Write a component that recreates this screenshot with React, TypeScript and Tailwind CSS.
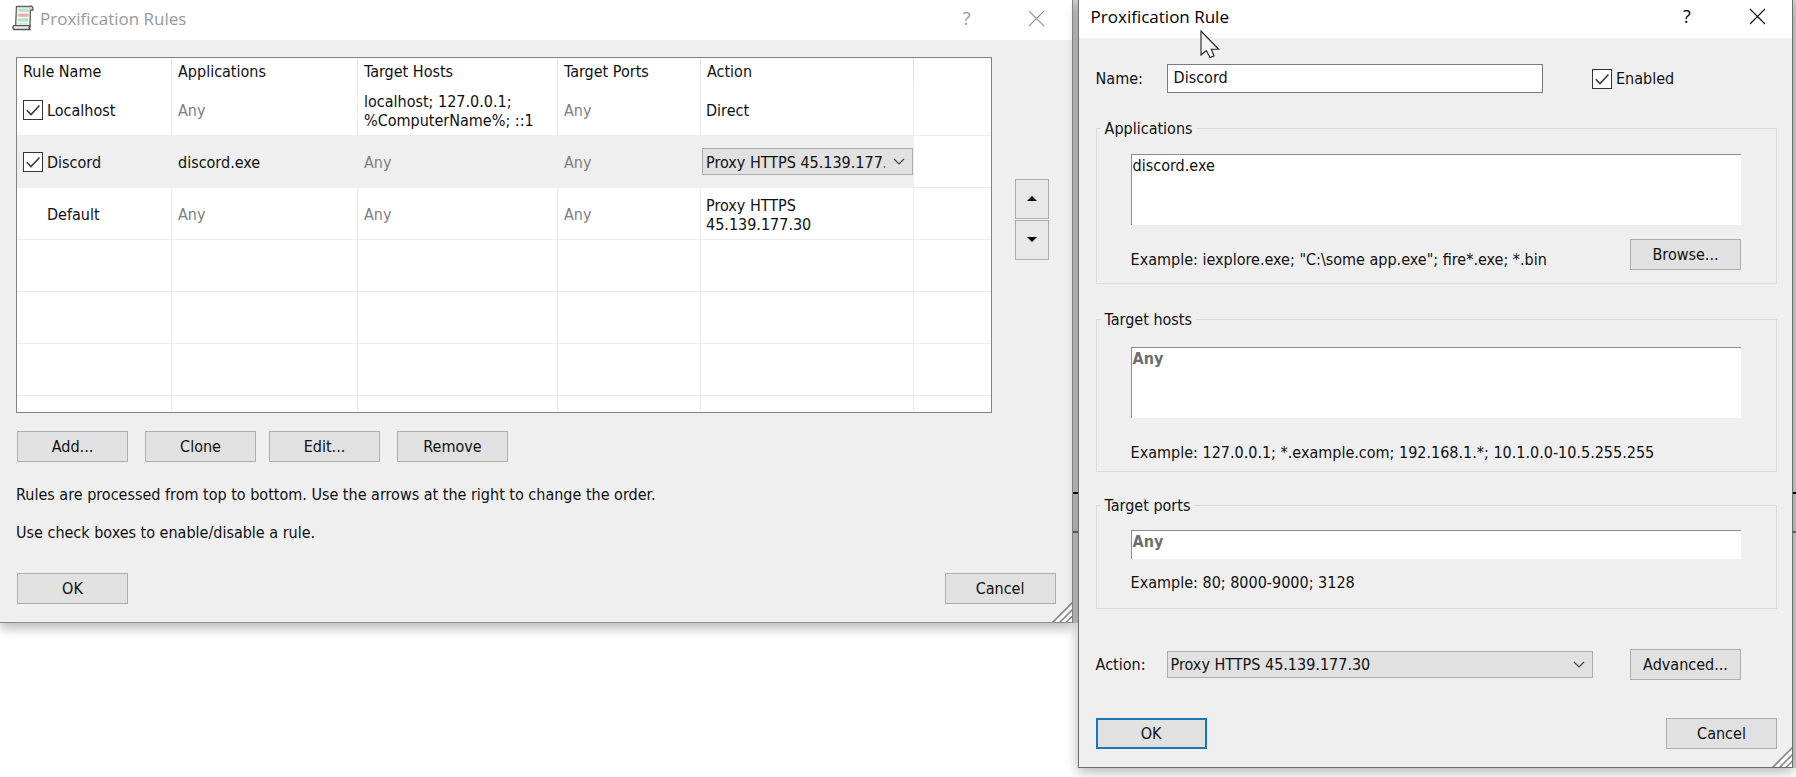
import React from 'react';

interface Rule {
  name: string;
  apps: string;
  hosts: string;
  ports: string;
  action: string;
  hasCheckbox: boolean;
  selected?: boolean;
}

const PROXY = 'Proxy HTTPS 45.139.177.30';

const rules: Rule[] = [
  { name: 'Localhost', apps: 'Any', hosts: 'localhost; 127.0.0.1; %ComputerName%; ::1', ports: 'Any', action: 'Direct', hasCheckbox: true },
  { name: 'Discord', apps: 'discord.exe', hosts: 'Any', ports: 'Any', action: PROXY, hasCheckbox: true, selected: true },
  { name: 'Default', apps: 'Any', hosts: 'Any', ports: 'Any', action: PROXY, hasCheckbox: false },
];

const headers = ['Rule Name', 'Applications', 'Target Hosts', 'Target Ports', 'Action', ''];

const PushButton: React.FC<{ children: React.ReactNode; primary?: boolean; className?: string }> = ({
  children,
  primary,
  className = '',
}) => (
  <button
    type="button"
    className={`h-[31px] w-[111px] shrink-0 bg-[#e1e1e1] pt-px ${
      primary ? 'border-2 border-[#1a76b9]' : 'border border-[#adadad]'
    } ${className}`}
  >
    {children}
  </button>
);

const CheckBox: React.FC<{ id: string }> = ({ id }) => (
  <span className="relative block size-5 shrink-0">
    <input
      id={id}
      type="checkbox"
      defaultChecked
      className="peer block size-5 appearance-none border border-[#333333] bg-white"
    />
    <svg viewBox="0 0 20 20" className="pointer-events-none absolute inset-0 hidden size-5 peer-checked:block">
      <path d="M3.7 10.2 8 14.5 16.5 5.5" fill="none" stroke="#3c3c3c" strokeWidth="1.6" />
    </svg>
  </span>
);

const DropDown: React.FC<{ id: string; label?: string; className?: string }> = ({ id, label, className = '' }) => (
  <span className={`relative block ${className}`}>
    <select
      id={id}
      aria-label={label}
      className="block h-[27px] w-full appearance-none border border-[#adadad] bg-[#e1e1e1] pt-px pr-[27px] pl-[3px]"
    >
      <option>{PROXY}</option>
      <option>Direct</option>
      <option>Block</option>
    </select>
    <svg viewBox="0 0 12 7" className="pointer-events-none absolute top-[10px] right-2 h-[7px] w-3">
      <path d="M1 1 6 6 11 1" fill="none" stroke="#444444" strokeWidth="1.2" />
    </svg>
  </span>
);

const TitleButtons: React.FC = () => (
  <div className="ml-auto flex items-center">
    <button type="button" aria-label="Help" className="w-[70px] font-['Open_Sans'] text-lg leading-6">
      ?
    </button>
    <button type="button" aria-label="Close" className="flex w-[70px] justify-center">
      <svg viewBox="0 0 17 17" className="size-[17px]">
        <path d="M1 1 16 16M16 1 1 16" fill="none" stroke="currentColor" strokeWidth="1.1" />
      </svg>
    </button>
  </div>
);

const ResizeGrip: React.FC = () => (
  <svg viewBox="0 0 20 20" className="absolute right-0 bottom-0 size-5">
    <path d="M1 20 20 1V20Z" fill="#ffffff" />
    <path d="M.5 20.5 20.5.5M7.5 20.5 20.5 7.5M14 20.5 20.5 14" fill="none" stroke="#8e8e8e" strokeWidth="1.7" />
  </svg>
);

const ScrollIcon: React.FC = () => (
  <svg viewBox="0 0 22 26" className="h-[26px] w-[22px]">
    <path d="M4.5 1.5h14l-.5 21H3.5z" fill="#eef7f0" stroke="#666666" strokeWidth="1.4" />
    <path d="M17.5 1.3c2.8-.6 3.9.8 3.4 3.9h-2.4" fill="#dcdcdc" stroke="#555555" strokeWidth="1.3" />
    <path d="M1.6 20.6h16c-.9 1.5-.6 2.8.3 3.9H1.8c-1.3-1.1-1.2-2.8-.2-3.9z" fill="#eeeeee" stroke="#555555" strokeWidth="1.3" />
    <path d="M6.5 5.3h10M6 15h10" stroke="#b4e0c4" strokeWidth="3" />
    <path d="M6.2 10.2h10.2" stroke="#f5a9a9" strokeWidth="3" />
    <path d="M6 18.8h9.5" stroke="#c6ead2" strokeWidth="1.6" />
  </svg>
);

// window behind the dialogs, seen only in the gaps between them
const BackgroundEdge: React.FC<{ className: string }> = ({ className }) => (
  <div className={`flex shrink-0 flex-col bg-[#d2d2d2] ${className}`}>
    <div className="h-[494px] border-b-2 border-black" />
    <div className="h-[39px] border-b-2 border-[#6a6a6a] bg-[#cccccc]" />
  </div>
);

const Cell: React.FC<{ text: string; selected?: boolean }> = ({ text, selected }) => (
  <td
    className={`border-r border-b pt-[2px] pr-[5px] pl-[6px] ${
      selected ? 'border-[#efefef] bg-[#efefef]' : 'border-[#ececec]'
    } ${text === 'Any' ? 'text-[#808080]' : ''}`}
  >
    {text}
  </td>
);

const RulesTable: React.FC = () => (
  <div className="h-[356px] min-w-0 flex-1 overflow-hidden border border-[#828282] bg-white">
    <table className="w-full table-fixed border-separate border-spacing-0 text-left leading-[19px]">
      <colgroup>
        <col className="w-[155px]" />
        <col className="w-[186px]" />
        <col className="w-[200px]" />
        <col className="w-[143px]" />
        <col className="w-[213px]" />
        <col />
      </colgroup>
      <thead>
        <tr className="h-[26px]">
          {headers.map((h, i) => (
            <th key={i} className={`pt-px pl-[6px] font-normal ${i < 5 ? 'border-r border-[#e5e5e5]' : ''}`}>
              {h}
            </th>
          ))}
        </tr>
      </thead>
      <tbody>
        {rules.map((rule) => {
          const look = rule.selected ? 'border-[#efefef] bg-[#efefef]' : 'border-[#ececec]';
          return (
            <tr key={rule.name} className="h-[52px]">
              <td className={`border-r border-b pt-px pl-[6px] ${look}`}>
                <label className="flex items-center gap-1">
                  {rule.hasCheckbox ? <CheckBox id={`rule-${rule.name}`} /> : <span className="size-5" />}
                  <span className="pt-px">{rule.name}</span>
                </label>
              </td>
              <Cell text={rule.apps} selected={rule.selected} />
              <Cell text={rule.hosts} selected={rule.selected} />
              <Cell text={rule.ports} selected={rule.selected} />
              {rule.selected ? (
                <td className={`border-r border-b pl-px ${look}`}>
                  <DropDown id="rule-action" label="Action" />
                </td>
              ) : (
                <td className={`border-r border-b pt-[2px] pr-10 pl-[5px] ${look}`}>{rule.action}</td>
              )}
              <td className="border-b border-[#ececec]" />
            </tr>
          );
        })}
        {[0, 1, 2, 3].map((row) => (
          <tr key={row} className="h-[52px]">
            {headers.map((_, i) => (
              <td key={i} className={`border-b border-[#ececec] ${i < 5 ? 'border-r' : ''}`} />
            ))}
          </tr>
        ))}
      </tbody>
    </table>
  </div>
);

const arrowButton = 'flex h-10 w-[34px] items-center justify-center border border-[#adadad] bg-[#e8e8e8] pb-[2px]';

const RulesWindow: React.FC = () => (
  <section className="relative min-w-0 flex-1 border-r border-b border-[#8a8a8a] bg-[#efefef] shadow-[0_6px_10px_rgba(0,0,0,0.25)]">
    <header className="flex h-10 items-center bg-white pb-1 pl-3 text-[#999999]">
      <ScrollIcon />
      <h1 className="ml-[6px] pt-px font-['Open_Sans'] text-[17px] leading-5">Proxification Rules</h1>
      <TitleButtons />
    </header>

    <div className="px-4 pt-[17px] pb-[18px]">
      <div className="flex items-center gap-[23px] pr-[7px]">
        <RulesTable />
        <div className="-mt-[31px] flex flex-col gap-px">
          <button type="button" aria-label="Move up" className={arrowButton}>
            <svg viewBox="0 0 10 5" className="h-[5px] w-[10px]">
              <path d="M0 5 5 0 10 5Z" fill="#000000" />
            </svg>
          </button>
          <button type="button" aria-label="Move down" className={arrowButton}>
            <svg viewBox="0 0 10 5" className="h-[5px] w-[10px]">
              <path d="M0 0 5 5 10 0Z" fill="#000000" />
            </svg>
          </button>
        </div>
      </div>

      <div className="mt-[18px] flex pl-px">
        <PushButton>Add...</PushButton>
        <PushButton className="ml-[17px]">Clone</PushButton>
        <PushButton className="ml-[13px]">Edit...</PushButton>
        <PushButton className="ml-[17px]">Remove</PushButton>
      </div>

      <p className="mt-[23px]">
        Rules are processed from top to bottom. Use the arrows at the right to change the order.
      </p>
      <p className="mt-[18px]">Use check boxes to enable/disable a rule.</p>

      <div className="mt-[30px] flex justify-between pl-px">
        <PushButton>OK</PushButton>
        <PushButton>Cancel</PushButton>
      </div>
    </div>
    <ResizeGrip />
  </section>
);

const Group: React.FC<{ title: string; className: string; children: React.ReactNode }> = ({
  title,
  className,
  children,
}) => (
  <fieldset className={`border border-[#dadada] pr-[35px] pl-[34px] ${className}`}>
    <legend className="-ml-[30px] px-1 pt-[2px]">{title}</legend>
    {children}
  </fieldset>
);

const sunken = 'block w-full resize-none overflow-hidden border-t border-l border-[#8c8c8c] bg-white px-px pt-px';

const RuleWindow: React.FC = () => (
  <section className="relative min-w-0 flex-1 border-r border-b border-l border-[#6e6e6e] bg-[#efefef] shadow-[0_4px_12px_rgba(0,0,0,0.3)]">
    <header className="flex h-[38px] items-center bg-white pb-[6px] pl-3 text-black">
      <h1 className="pt-px font-['Open_Sans'] text-[17px] leading-5">Proxification Rule</h1>
      <TitleButtons />
    </header>

    <form className="pt-[26px] pr-[15px] pb-[18px] pl-[17px]">
      <div className="flex items-center">
        <label htmlFor="name" className="w-[71px] pt-px">Name:</label>
        <input
          id="name"
          type="text"
          defaultValue="Discord"
          className="h-[29px] min-w-0 flex-1 border border-[#7a7a7a] bg-white px-[6px] pb-[2px]"
        />
        <label className="ml-[49px] flex w-[185px] items-center gap-1">
          <CheckBox id="enabled" />
          <span className="pt-px">Enabled</span>
        </label>
      </div>

      <Group title="Applications" className="mt-6 pt-[15px] pb-[13px]">
        <textarea aria-label="Applications" defaultValue="discord.exe" className={`${sunken} h-[71px]`} />
        <div className="mt-[14px] flex items-end justify-between">
          <p>Example: iexplore.exe; "C:\some app.exe"; fire*.exe; *.bin</p>
          <PushButton>Browse...</PushButton>
        </div>
      </Group>

      <Group title="Target hosts" className="mt-6 pt-[17px] pb-2">
        <textarea aria-label="Target hosts" defaultValue="Any" className={`${sunken} h-[71px] font-bold text-[#6d6d6d]`} />
        <p className="mt-[25px]">Example: 127.0.0.1; *.example.com; 192.168.1.*; 10.1.0.0-10.5.255.255</p>
      </Group>

      <Group title="Target ports" className="mt-[22px] pt-[14px] pb-[15px]">
        <textarea aria-label="Target ports" rows={1} defaultValue="Any" className={`${sunken} h-[29px] font-bold text-[#6d6d6d]`} />
        <p className="mt-[14px]">Example: 80; 8000-9000; 3128</p>
      </Group>

      <div className="mt-10 flex items-center pr-9">
        <label htmlFor="action" className="w-[71px] pt-px">Action:</label>
        <DropDown id="action" className="flex-1" />
        <PushButton className="ml-[37px]">Advanced...</PushButton>
      </div>

      <div className="mt-[38px] flex justify-between">
        <PushButton primary>OK</PushButton>
        <PushButton>Cancel</PushButton>
      </div>
    </form>
    <ResizeGrip />

    {/* mouse pointer */}
    <svg viewBox="-1 -1 20 29" className="pointer-events-none absolute top-[30px] left-[121px] h-[29px] w-5">
      <path d="M0 0V24L5.3 19.5 9 26.5 13 25 10.3 18.3H17.7Z" fill="#f4f4f4" stroke="#222222" strokeWidth="1.1" />
    </svg>
  </section>
);

const App: React.FC = () => {
  return (
    <div className="flex min-h-screen items-start overflow-hidden bg-white font-['DejaVu_Sans_Condensed',sans-serif] text-base leading-5 text-[#101010]">
      <div className="flex min-w-0 flex-[3]">
        <RulesWindow />
        <BackgroundEdge className="w-[5px]" />
      </div>
      <div className="flex min-w-0 flex-[2]">
        <RuleWindow />
        <BackgroundEdge className="w-[3px]" />
      </div>
    </div>
  );
};

export default App;
